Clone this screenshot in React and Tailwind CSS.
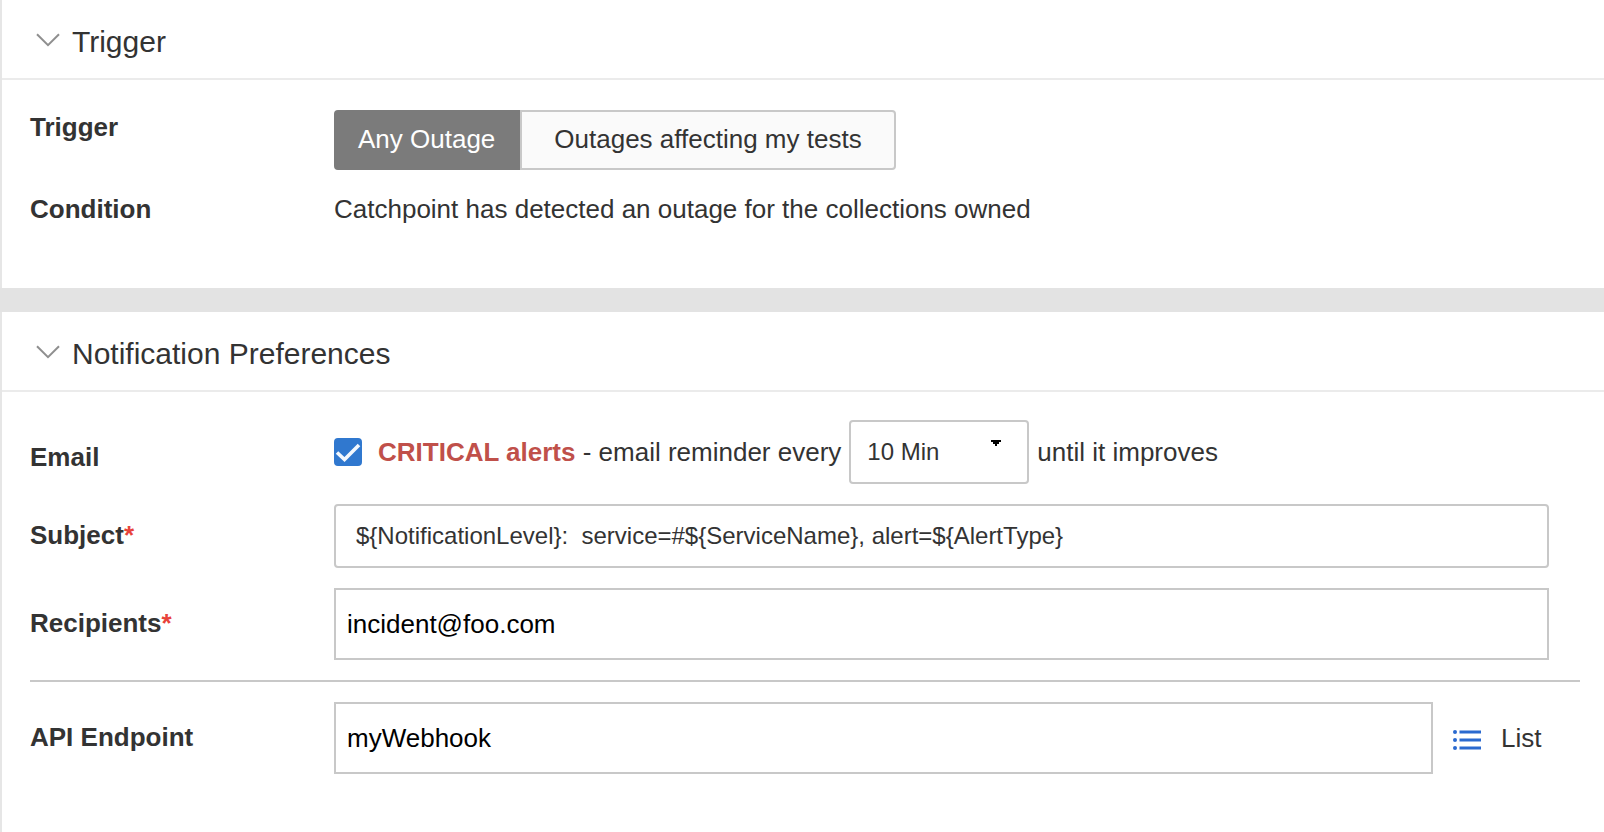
import React, { useState } from 'react';

const ChevronIcon = ({ open }) => (
  <svg
    width="24"
    height="14"
    viewBox="0 0 24 14"
    fill="none"
    stroke="#8f8f8f"
    strokeWidth="2"
    aria-hidden="true"
    className={open ? 'mb-1 shrink-0' : 'mb-1 shrink-0 -rotate-90'}
  >
    <path d="M1 1.2 12 12.2 23 1.2" />
  </svg>
);

const ListIcon = () => (
  <svg
    width="28"
    height="20"
    viewBox="0 0 28 20"
    fill="#2a69cf"
    aria-hidden="true"
    className="mt-1 shrink-0"
  >
    {[2, 10, 18].map(y => (
      <g key={y}>
        <circle cx="2" cy={y} r="2" />
        <rect x="6.5" y={y - 1.5} width="21.5" height="3" />
      </g>
    ))}
  </svg>
);

const Section = ({ title, children }) => {
  const [open, setOpen] = useState(true);

  return (
    <section className="border-l-2 border-[#e6e6e6] bg-white">
      <h2 className="border-b-2 border-[#ebebeb]">
        <button
          type="button"
          aria-expanded={open}
          onClick={() => setOpen(!open)}
          className="flex h-[78px] w-full items-center gap-3 pt-1.5 pl-[34px] text-left text-[30px] leading-9"
        >
          <ChevronIcon open={open} />
          {title}
        </button>
      </h2>
      {open && children}
    </section>
  );
};

const Label = ({ htmlFor, required, className = 'pb-0.5', children }) => (
  <label htmlFor={htmlFor} className={`w-[304px] shrink-0 font-bold ${className}`}>
    {children}
    {required && <span className="text-[#e8433b]">*</span>}
  </label>
);

const TriggerToggle = () => {
  const [selected, setSelected] = useState('any');
  const active = 'border-[#7b7b7b] bg-[#7b7b7b] text-white';
  const idle = 'border-[#c8c8c8] bg-[#fafafa]';

  return (
    <div role="group" aria-labelledby="trigger-label" className="flex h-[60px]">
      <button
        type="button"
        aria-pressed={selected === 'any'}
        onClick={() => setSelected('any')}
        className={`rounded-l-sm border-2 pr-[23px] pb-0.5 pl-[22px] ${selected === 'any' ? active : idle}`}
      >
        Any Outage
      </button>
      <button
        type="button"
        aria-pressed={selected === 'mine'}
        onClick={() => setSelected('mine')}
        className={`rounded-r-sm border-2 px-8 pb-0.5 ${selected === 'mine' ? active : idle}`}
      >
        Outages affecting my tests
      </button>
    </div>
  );
};

const EmailReminder = () => {
  const [checked, setChecked] = useState(true);

  return (
    <div className="flex items-center gap-2">
      <span className="mr-2 grid size-7 shrink-0">
        <input
          id="email"
          type="checkbox"
          checked={checked}
          onChange={e => setChecked(e.target.checked)}
          className="col-start-1 row-start-1 size-7 appearance-none rounded-sm border-2 border-[#c8c8c8] checked:border-[#3078cf] checked:bg-[#3078cf]"
        />
        {checked && (
          <svg
            viewBox="0 0 28 28"
            fill="none"
            stroke="#f4f8fd"
            strokeWidth="3.6"
            aria-hidden="true"
            className="pointer-events-none col-start-1 row-start-1 size-7"
          >
            <path d="M3 14.5 10.5 21.5 25 7" />
          </svg>
        )}
      </span>
      <label htmlFor="email">
        <span className="font-bold text-[#c0504a]">CRITICAL alerts</span> - email
        reminder every
      </label>
      <div className="relative">
        <select
          aria-label="Reminder interval"
          defaultValue="10"
          className="h-16 w-[180px] appearance-none rounded border-2 border-[#c8c8c8] bg-white px-4 text-2xl"
        >
          <option value="5">5 Min</option>
          <option value="10">10 Min</option>
          <option value="30">30 Min</option>
        </select>
        <svg
          width="10"
          height="6"
          viewBox="0 0 10 6"
          aria-hidden="true"
          className="pointer-events-none absolute top-5 right-7"
        >
          <path d="M0 0h10v2H8v2H6v2H4V4H2V2H0z" fill="#000000" />
        </svg>
      </div>
      <span>until it improves</span>
    </div>
  );
};

const App = () => (
  <main className="min-h-screen bg-white font-['Liberation_Sans',Arial,sans-serif] text-[26px] leading-[30px] text-[#333333]">
    <Section title="Trigger">
      <div className="flex flex-col gap-6 px-7 pt-[30px] pb-16">
        <div className="flex items-start">
          <span id="trigger-label" className="w-[304px] shrink-0 pt-0.5 font-bold">
            Trigger
          </span>
          <TriggerToggle />
        </div>
        <div className="flex">
          <span className="w-[304px] shrink-0 font-bold">Condition</span>
          <p>Catchpoint has detected an outage for the collections owned</p>
        </div>
      </div>
    </Section>

    <div className="h-6 bg-[#e3e3e3]" />

    <Section title="Notification Preferences">
      <form className="flex min-h-[440px] flex-col gap-5 pt-7 pr-6 pl-7">
        <div className="flex items-center">
          <Label htmlFor="email" className="pt-2.5">
            Email
          </Label>
          <EmailReminder />
        </div>
        <div className="flex items-center pr-[31px]">
          <Label htmlFor="subject" required>
            Subject
          </Label>
          <input
            id="subject"
            type="text"
            required
            defaultValue="${NotificationLevel}:  service=#${ServiceName}, alert=${AlertType}"
            className="h-16 min-w-0 flex-1 rounded border-2 border-[#c8c8c8] px-5 text-2xl"
          />
        </div>
        <div className="flex items-center pr-[31px]">
          <Label htmlFor="recipients" required>
            Recipients
          </Label>
          <input
            id="recipients"
            type="text"
            required
            defaultValue="incident@foo.com"
            className="h-[72px] min-w-0 flex-1 border-2 border-[#c8c8c8] px-[11px] text-black"
          />
        </div>
        <hr className="border-t-2 border-[#c8c8c8]" />
        <div className="flex items-center pr-[31px]">
          <Label htmlFor="endpoint">API Endpoint</Label>
          <input
            id="endpoint"
            type="text"
            defaultValue="myWebhook"
            className="h-[72px] min-w-0 flex-1 border-2 border-[#c8c8c8] px-[11px] text-black"
          />
          <button type="button" className="ml-5 flex w-24 items-center gap-5">
            <ListIcon />
            List
          </button>
        </div>
      </form>
    </Section>
  </main>
);

export default App;
